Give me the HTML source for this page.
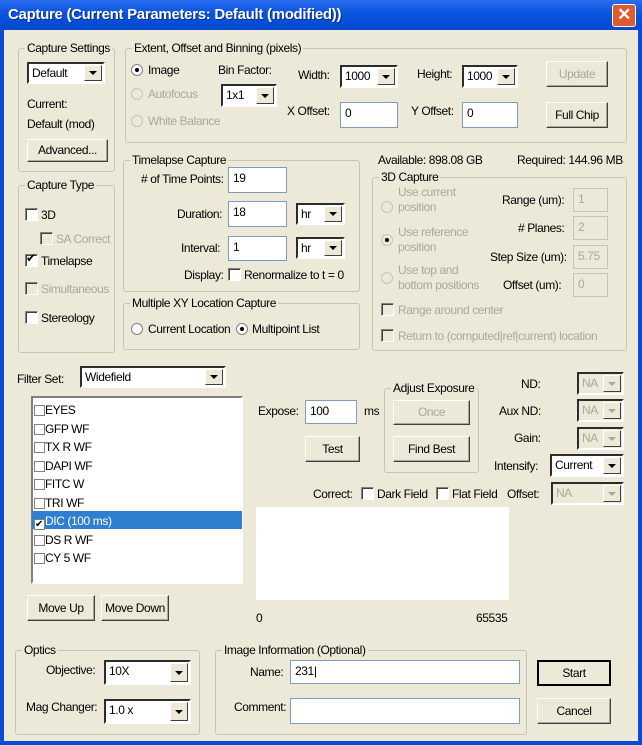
<!DOCTYPE html>
<html><head><meta charset="utf-8"><style>
*{box-sizing:border-box;margin:0;padding:0}
body{width:642px;height:745px;overflow:hidden;background:#0a4bd6;font-family:"Liberation Sans",sans-serif;font-size:12px;letter-spacing:-0.4px;color:#000;position:relative}
.a{position:absolute;white-space:nowrap}
#tb{left:0;top:0;width:642px;height:30px;background:linear-gradient(#2a6ef0,#0a56e0 40%,#0348d0);}
#title{left:8px;top:6px;color:#fff;font-weight:bold;font-size:15px;letter-spacing:-0.3px;text-shadow:1px 1px #0a2a80}
#cl{left:612px;top:4px;width:24px;height:23px;background:#e05a30;border:1px solid #fff;border-radius:3px;color:#fff;font-weight:bold;font-size:17px;text-align:center;line-height:20px}
#body{left:4px;top:30px;width:634px;height:711px;background:#ece9d8}
.g{position:absolute;border:1px solid #c8c5b3;border-radius:3px}
.gl{position:absolute;top:-8px;left:6px;background:#ece9d8;padding:0 2px;line-height:14px}
.in{position:absolute;background:#fff;border:1px solid #7f9db9;padding:3px 4px;line-height:14px}
.dis{background:#ece9d8;color:#aca899;border-color:#c8c5b3}
.sel{position:absolute;background:#fff;border:2px inset #d4d0c8;border-color:#808080 #fff #fff #808080;padding:2px 3px;line-height:14px}
.sel:after{content:"";position:absolute;right:1px;top:1px;bottom:1px;width:16px;background:#ece9d8 ;border:1px solid;border-color:#fff #404040 #404040 #fff}
.sel b{position:absolute;right:6px;top:50%;margin-top:-2px;width:0;height:0;border:4px solid transparent;border-top:4px solid #000;border-bottom:0;z-index:2}
.sel.dis:after{}
.sel.dis b{border-top-color:#aca899}
.btn{position:absolute;background:#ece9d8;border:1px solid;border-color:#fff #404040 #404040 #fff;box-shadow:inset -1px -1px #aca899;text-align:center}
.btn.d{color:#aca899}
.cb{position:absolute;width:13px;height:13px;background:#fff;border:1px solid;border-color:#808080 #fff #fff #808080;box-shadow:inset 1px 1px #404040}
.cb.d{background:#ece9d8}
.rd{position:absolute;width:12px;height:12px;border-radius:50%;background:#fff;border:1px solid #808080}
.rd.on:after{content:"";position:absolute;left:3px;top:3px;width:4px;height:4px;border-radius:50%;background:#000}
.rd.d{background:#ece9d8;border-color:#c8c5b3}
.gr{color:#aca899}
</style></head><body>
<div id="tb" class="a"></div>
<div id="title" class="a">Capture (Current Parameters: Default (modified))</div>
<div id="cl" class="a">✕</div>
<div id="body" class="a"></div>

<!-- Capture Settings -->
<div class="g" style="left:18px;top:48px;width:97px;height:124px"><span class="gl">Capture Settings</span></div>
<div class="sel" style="left:27px;top:62px;width:78px;height:22px">Default<b></b></div>
<div class="a" style="left:27px;top:97px">Current:</div>
<div class="a" style="left:27px;top:117px">Default (mod)</div>
<div class="btn" style="left:27px;top:139px;width:81px;height:23px;line-height:20px">Advanced...</div>

<!-- Extent -->
<div class="g" style="left:125px;top:48px;width:502px;height:95px"><span class="gl">Extent, Offset and Binning (pixels)</span></div>
<div class="rd on" style="left:131px;top:64px"></div><div class="a" style="left:148px;top:63px">Image</div>
<div class="rd d" style="left:131px;top:88px"></div><div class="a gr" style="left:148px;top:87px">Autofocus</div>
<div class="rd d" style="left:131px;top:115px"></div><div class="a gr" style="left:148px;top:114px">White Balance</div>
<div class="a" style="left:218px;top:63px">Bin Factor:</div>
<div class="sel" style="left:221px;top:84px;width:56px;height:23px">1x1<b></b></div>
<div class="a" style="left:298px;top:68px">Width:</div>
<div class="sel" style="left:340px;top:65px;width:58px;height:23px">1000<b></b></div>
<div class="a" style="left:417px;top:67px">Height:</div>
<div class="sel" style="left:462px;top:65px;width:56px;height:23px">1000<b></b></div>
<div class="btn d" style="left:546px;top:61px;width:62px;height:26px;line-height:24px">Update</div>
<div class="a" style="left:287px;top:104px">X Offset:</div>
<div class="in" style="left:340px;top:102px;width:58px;height:26px">0</div>
<div class="a" style="left:411px;top:104px">Y Offset:</div>
<div class="in" style="left:462px;top:102px;width:56px;height:26px">0</div>
<div class="btn" style="left:546px;top:102px;width:62px;height:26px;line-height:24px">Full Chip</div>

<!-- Capture Type -->
<div class="g" style="left:18px;top:185px;width:97px;height:168px"><span class="gl">Capture Type</span></div>
<div class="cb" style="left:25px;top:208px"></div><div class="a" style="left:41px;top:208px">3D</div>
<div class="cb d" style="left:40px;top:232px"></div><div class="a gr" style="left:56px;top:232px">SA Correct</div>
<div class="cb" style="left:25px;top:254px"></div><div class="a" style="left:26px;top:251px;font-size:12px">✔</div><div class="a" style="left:41px;top:254px">Timelapse</div>
<div class="cb d" style="left:25px;top:282px"></div><div class="a gr" style="left:41px;top:282px">Simultaneous</div>
<div class="cb" style="left:25px;top:311px"></div><div class="a" style="left:41px;top:311px">Stereology</div>

<!-- Timelapse -->
<div class="g" style="left:123px;top:160px;width:237px;height:132px"><span class="gl">Timelapse Capture</span></div>
<div class="a" style="left:141px;top:172px">#&nbsp;of Time Points:</div>
<div class="in" style="left:228px;top:167px;width:59px;height:26px">19</div>
<div class="a" style="left:177px;top:207px">Duration:</div>
<div class="in" style="left:228px;top:201px;width:59px;height:26px">18</div>
<div class="sel" style="left:296px;top:203px;width:49px;height:22px">hr<b></b></div>
<div class="a" style="left:181px;top:241px">Interval:</div>
<div class="in" style="left:228px;top:236px;width:59px;height:25px">1</div>
<div class="sel" style="left:296px;top:237px;width:49px;height:22px">hr<b></b></div>
<div class="a" style="left:184px;top:268px">Display:</div>
<div class="cb" style="left:228px;top:268px"></div><div class="a" style="left:244px;top:268px">Renormalize to t = 0</div>

<div class="g" style="left:123px;top:303px;width:237px;height:47px"><span class="gl">Multiple XY Location Capture</span></div>
<div class="rd" style="left:131px;top:323px"></div><div class="a" style="left:148px;top:322px">Current Location</div>
<div class="rd on" style="left:236px;top:323px"></div><div class="a" style="left:252px;top:322px">Multipoint List</div>

<!-- 3D capture -->
<div class="a" style="left:378px;top:153px">Available: 898.08 GB</div>
<div class="a" style="left:517px;top:153px">Required: 144.96 MB</div>
<div class="g" style="left:372px;top:177px;width:255px;height:174px"><span class="gl">3D Capture</span></div>
<div class="rd d" style="left:381px;top:201px"></div><div class="a gr" style="left:398px;top:185px;line-height:15px">Use current<br>position</div>
<div class="rd d on" style="left:381px;top:234px"></div><div class="a gr" style="left:398px;top:225px;line-height:15px">Use reference<br>position</div>
<div class="rd d" style="left:381px;top:272px"></div><div class="a gr" style="left:398px;top:263px;line-height:15px">Use top and<br>bottom positions</div>
<div class="cb d" style="left:381px;top:303px"></div><div class="a gr" style="left:398px;top:303px">Range around center</div>
<div class="cb d" style="left:381px;top:329px"></div><div class="a gr" style="left:398px;top:329px">Return to (computed|ref|current) location</div>
<div class="a" style="left:502px;top:193px">Range (um):</div>
<div class="in dis" style="left:573px;top:188px;width:35px;height:24px">1</div>
<div class="a" style="left:518px;top:221px">#&nbsp;Planes:</div>
<div class="in dis" style="left:573px;top:216px;width:35px;height:24px">2</div>
<div class="a" style="left:490px;top:250px">Step Size (um):</div>
<div class="in dis" style="left:573px;top:245px;width:35px;height:24px">5.75</div>
<div class="a" style="left:503px;top:278px">Offset (um):</div>
<div class="in dis" style="left:573px;top:273px;width:35px;height:24px">0</div>

<!-- Filter -->
<div class="a" style="left:17px;top:372px">Filter Set:</div>
<div class="sel" style="left:80px;top:366px;width:146px;height:22px">Widefield<b></b></div>
<div class="a" style="left:31px;top:396px;width:212px;height:188px;background:#fff;border:2px solid;border-color:#808080 #fff #fff #808080"></div>
<div class="a" style="left:32px;top:511px;width:210px;height:18px;background:#2f7fd0"></div>
<div class="a" style="left:34px;top:401px;line-height:18.5px">
<div><span class="cb" style="position:relative;display:inline-block;vertical-align:-2px;width:11px;height:11px;box-shadow:none;border:1px solid #808080"></span>EYES</div>
<div><span class="cb" style="position:relative;display:inline-block;vertical-align:-2px;width:11px;height:11px;box-shadow:none;border:1px solid #808080"></span>GFP WF</div>
<div><span class="cb" style="position:relative;display:inline-block;vertical-align:-2px;width:11px;height:11px;box-shadow:none;border:1px solid #808080"></span>TX R WF</div>
<div><span class="cb" style="position:relative;display:inline-block;vertical-align:-2px;width:11px;height:11px;box-shadow:none;border:1px solid #808080"></span>DAPI WF</div>
<div><span class="cb" style="position:relative;display:inline-block;vertical-align:-2px;width:11px;height:11px;box-shadow:none;border:1px solid #808080"></span>FITC W</div>
<div><span class="cb" style="position:relative;display:inline-block;vertical-align:-2px;width:11px;height:11px;box-shadow:none;border:1px solid #808080"></span>TRI WF</div>
<div style="color:#fff"><span class="cb" style="position:relative;display:inline-block;vertical-align:-2px;width:11px;height:11px;box-shadow:none;border:1px solid #808080;color:#000;font-size:10px;line-height:10px">✔</span>DIC (100 ms)</div>
<div><span class="cb" style="position:relative;display:inline-block;vertical-align:-2px;width:11px;height:11px;box-shadow:none;border:1px solid #808080"></span>DS R WF</div>
<div><span class="cb" style="position:relative;display:inline-block;vertical-align:-2px;width:11px;height:11px;box-shadow:none;border:1px solid #808080"></span>CY 5 WF</div>
</div>
<div class="btn" style="left:27px;top:595px;width:68px;height:26px;line-height:24px">Move Up</div>
<div class="btn" style="left:101px;top:595px;width:68px;height:26px;line-height:24px">Move Down</div>

<!-- Exposure -->
<div class="a" style="left:258px;top:404px">Expose:</div>
<div class="in" style="left:305px;top:400px;width:52px;height:24px">100</div>
<div class="a" style="left:364px;top:404px">ms</div>
<div class="btn" style="left:305px;top:436px;width:55px;height:26px;line-height:24px">Test</div>
<div class="g" style="left:384px;top:388px;width:95px;height:85px"><span class="gl">Adjust Exposure</span></div>
<div class="btn d" style="left:393px;top:400px;width:77px;height:25px;line-height:23px">Once</div>
<div class="btn" style="left:393px;top:436px;width:77px;height:26px;line-height:24px">Find Best</div>
<div class="a" style="left:521px;top:377px">ND:</div>
<div class="sel dis" style="left:577px;top:372px;width:47px;height:23px;background:#ece9d8">NA<b></b></div>
<div class="a" style="left:499px;top:404px">Aux ND:</div>
<div class="sel dis" style="left:577px;top:399px;width:47px;height:23px;background:#ece9d8">NA<b></b></div>
<div class="a" style="left:514px;top:431px">Gain:</div>
<div class="sel dis" style="left:577px;top:427px;width:47px;height:23px;background:#ece9d8">NA<b></b></div>
<div class="a" style="left:494px;top:459px">Intensify:</div>
<div class="sel" style="left:550px;top:454px;width:74px;height:23px">Current<b></b></div>
<div class="a" style="left:313px;top:487px">Correct:</div>
<div class="cb" style="left:361px;top:487px"></div><div class="a" style="left:377px;top:487px">Dark Field</div>
<div class="cb" style="left:436px;top:487px"></div><div class="a" style="left:452px;top:487px">Flat Field</div>
<div class="a" style="left:507px;top:487px">Offset:</div>
<div class="sel dis" style="left:551px;top:482px;width:73px;height:23px;background:#ece9d8">NA<b></b></div>
<div class="a" style="left:256px;top:507px;width:253px;height:93px;background:#fff"></div>
<div class="a" style="left:256px;top:611px">0</div>
<div class="a" style="left:476px;top:611px">65535</div>

<!-- Optics -->
<div class="g" style="left:15px;top:650px;width:185px;height:85px"><span class="gl">Optics</span></div>
<div class="a" style="left:46px;top:663px">Objective:</div>
<div class="sel" style="left:104px;top:660px;width:87px;height:25px">10X<b></b></div>
<div class="a" style="left:26px;top:700px">Mag Changer:</div>
<div class="sel" style="left:104px;top:699px;width:87px;height:25px">1.0 x<b></b></div>
<div class="g" style="left:215px;top:650px;width:312px;height:85px"><span class="gl">Image Information (Optional)</span></div>
<div class="a" style="left:250px;top:665px">Name:</div>
<div class="in" style="left:290px;top:660px;width:230px;height:24px">231|</div>
<div class="a" style="left:234px;top:700px">Comment:</div>
<div class="in" style="left:290px;top:698px;width:230px;height:26px"></div>
<div class="btn" style="left:537px;top:660px;width:74px;height:26px;line-height:22px;border:2px solid #000;box-shadow:none">Start</div>
<div class="btn" style="left:537px;top:698px;width:74px;height:26px;line-height:24px">Cancel</div>
</body></html>
